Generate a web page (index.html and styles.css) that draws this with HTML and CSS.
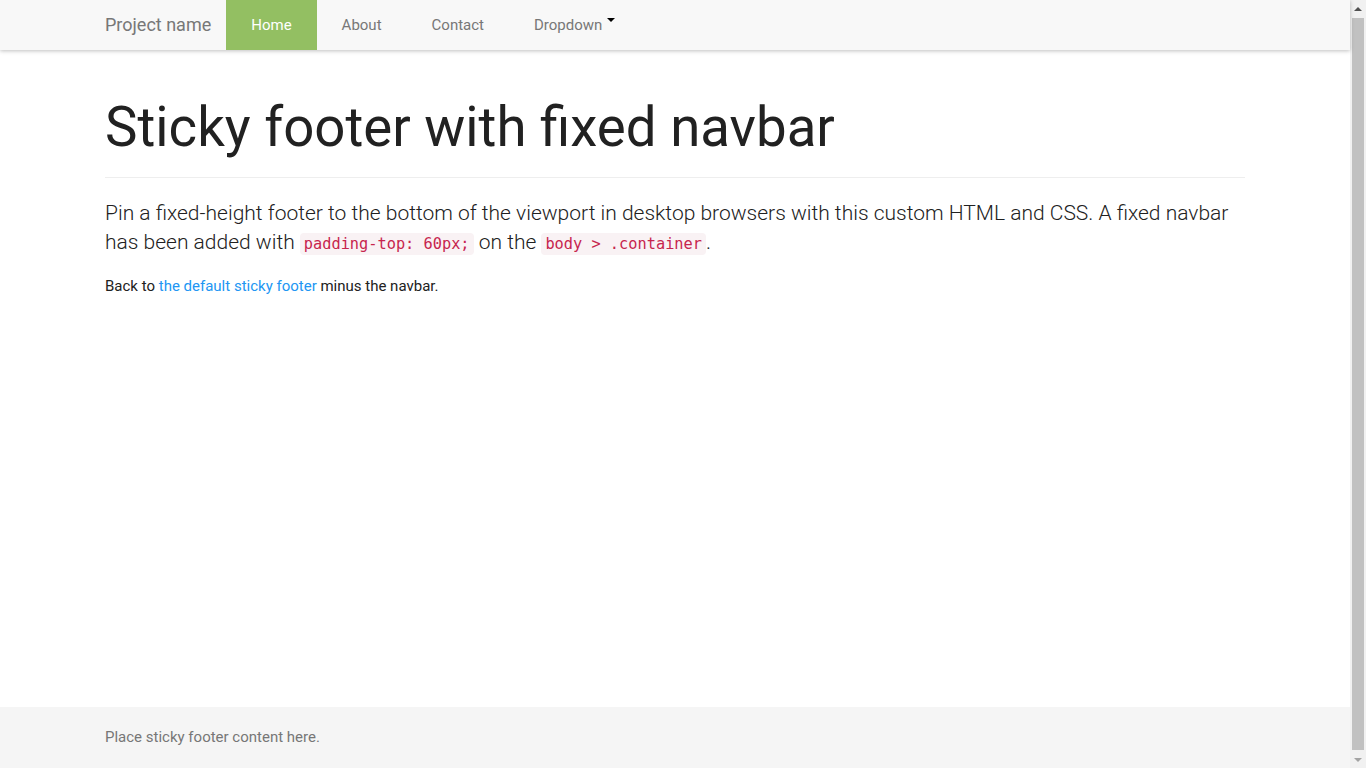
FILE: index.html
```html
<!DOCTYPE html>
<html lang="en">
<head>
<meta charset="utf-8">
<title>Sticky footer with fixed navbar</title>
<link rel="stylesheet" href="styles.css">
</head>
<body>
<div class="page">
  <nav class="navbar">
    <div class="navbar-inner">
      <a class="brand" href="#">Project name</a>
      <ul class="nav">
        <li><a class="nav-link active" href="#">Home</a></li>
        <li><a class="nav-link" href="#">About</a></li>
        <li><a class="nav-link" href="#">Contact</a></li>
        <li><a class="nav-link" href="#">Dropdown<span class="caret"></span></a></li>
      </ul>
    </div>
  </nav>
  <main class="container">
    <div class="page-header">
      <h1>Sticky footer with fixed navbar</h1>
    </div>
    <p class="lead">Pin a fixed-height footer to the bottom of the viewport in desktop browsers with this custom HTML and CSS. A fixed navbar has been added with <code>padding-top: 60px;</code> on the <code>body &gt; .container</code>.</p>
    <p class="back">Back to <a href="#">the default sticky footer</a> minus the navbar.</p>
  </main>
  <footer class="footer">
    <div class="footer-inner">
      <p class="text-muted">Place sticky footer content here.</p>
    </div>
  </footer>
</div>
<div class="scrollbar" aria-hidden="true">
  <div class="sb-btn"><span class="arrow-up"></span></div>
  <div class="sb-track"><div class="sb-thumb"></div></div>
  <div class="sb-btn"><span class="arrow-down"></span></div>
</div>
</body>
</html>
```
FILE: styles.css
```css
* {
  box-sizing: border-box;
}
html, body {
  height: 100%;
}
body {
  margin: 0;
  display: grid;
  grid-template-columns: 1fr 16px;
  overflow: hidden;
  font-family: Roboto, "Liberation Sans", Arial, sans-serif;
  font-size: 15px;
  line-height: 1.42857;
  color: #212121;
  background: #fff;
}
a {
  text-decoration: none;
}
.page {
  display: flex;
  flex-direction: column;
  min-height: 100vh;
  min-width: 0;
}
.navbar {
  height: 50px;
  flex: none;
  background: #f8f8f8;
  box-shadow: 0 1px 4px rgba(0, 0, 0, 0.25);
  position: relative;
  z-index: 2;
}
.navbar-inner {
  width: 1170px;
  margin: 0 auto;
  padding: 0 15px;
  display: flex;
  height: 50px;
}
.brand {
  margin-left: -15px;
  padding: 0 15px;
  height: 50px;
  line-height: 50px;
  font-size: 18px;
  color: #777;
}
.nav {
  list-style: none;
  margin: 0;
  padding: 0;
  display: flex;
}
.nav-link {
  display: block;
  height: 50px;
  line-height: 50px;
  padding: 0 25px;
  font-size: 15px;
  color: #777;
}
.nav-link.active {
  background: #93bf62;
  color: #fff;
}
.caret {
  display: inline-block;
  width: 0;
  height: 0;
  margin-left: 5px;
  vertical-align: 8px;
  border-top: 4px solid #000;
  border-left: 4px solid transparent;
  border-right: 4px solid transparent;
}
.container {
  flex: 1;
  width: 1170px;
  margin: 0 auto;
  padding: 0 15px;
}
.page-header {
  margin: 47px 0 21px;
  padding-bottom: 10px;
  border-bottom: 1px solid #eee;
}
h1 {
  margin: 0 0 10px;
  font-size: 54.6px;
  line-height: 1.1;
  font-weight: 400;
  color: #212121;
}
.lead {
  margin: 0 0 16px;
  font-size: 21px;
  line-height: 29.4px;
  font-weight: 300;
  color: #212121;
}
code {
  font-family: "DejaVu Sans Mono", "Liberation Mono", monospace;
  font-size: 15.3px;
  padding: 2px 4px;
  color: #c7254e;
  background: #f9f2f4;
  border-radius: 4px;
}
.back {
  margin: 0 0 10px;
}
.back a {
  color: #2196f3;
}
.footer {
  height: 61px;
  flex: none;
  background: #f5f5f5;
}
.footer-inner {
  width: 1170px;
  margin: 0 auto;
  padding: 0 15px;
}
.text-muted {
  margin: 20px 0;
  color: #777;
}
.scrollbar {
  display: flex;
  flex-direction: column;
  height: 100vh;
  background: #f1f1f1;
}
.sb-btn {
  height: 17px;
  flex: none;
  display: flex;
  align-items: center;
  justify-content: center;
}
.sb-track {
  flex: 1;
  padding: 1px 2px;
  display: flex;
}
.sb-thumb {
  flex: 1;
  background: #c1c1c1;
}
.arrow-up {
  width: 0;
  height: 0;
  border-left: 4px solid transparent;
  border-right: 4px solid transparent;
  border-bottom: 4px solid #505050;
}
.arrow-down {
  width: 0;
  height: 0;
  border-left: 4px solid transparent;
  border-right: 4px solid transparent;
  border-top: 4px solid #a3a3a3;
}
```
